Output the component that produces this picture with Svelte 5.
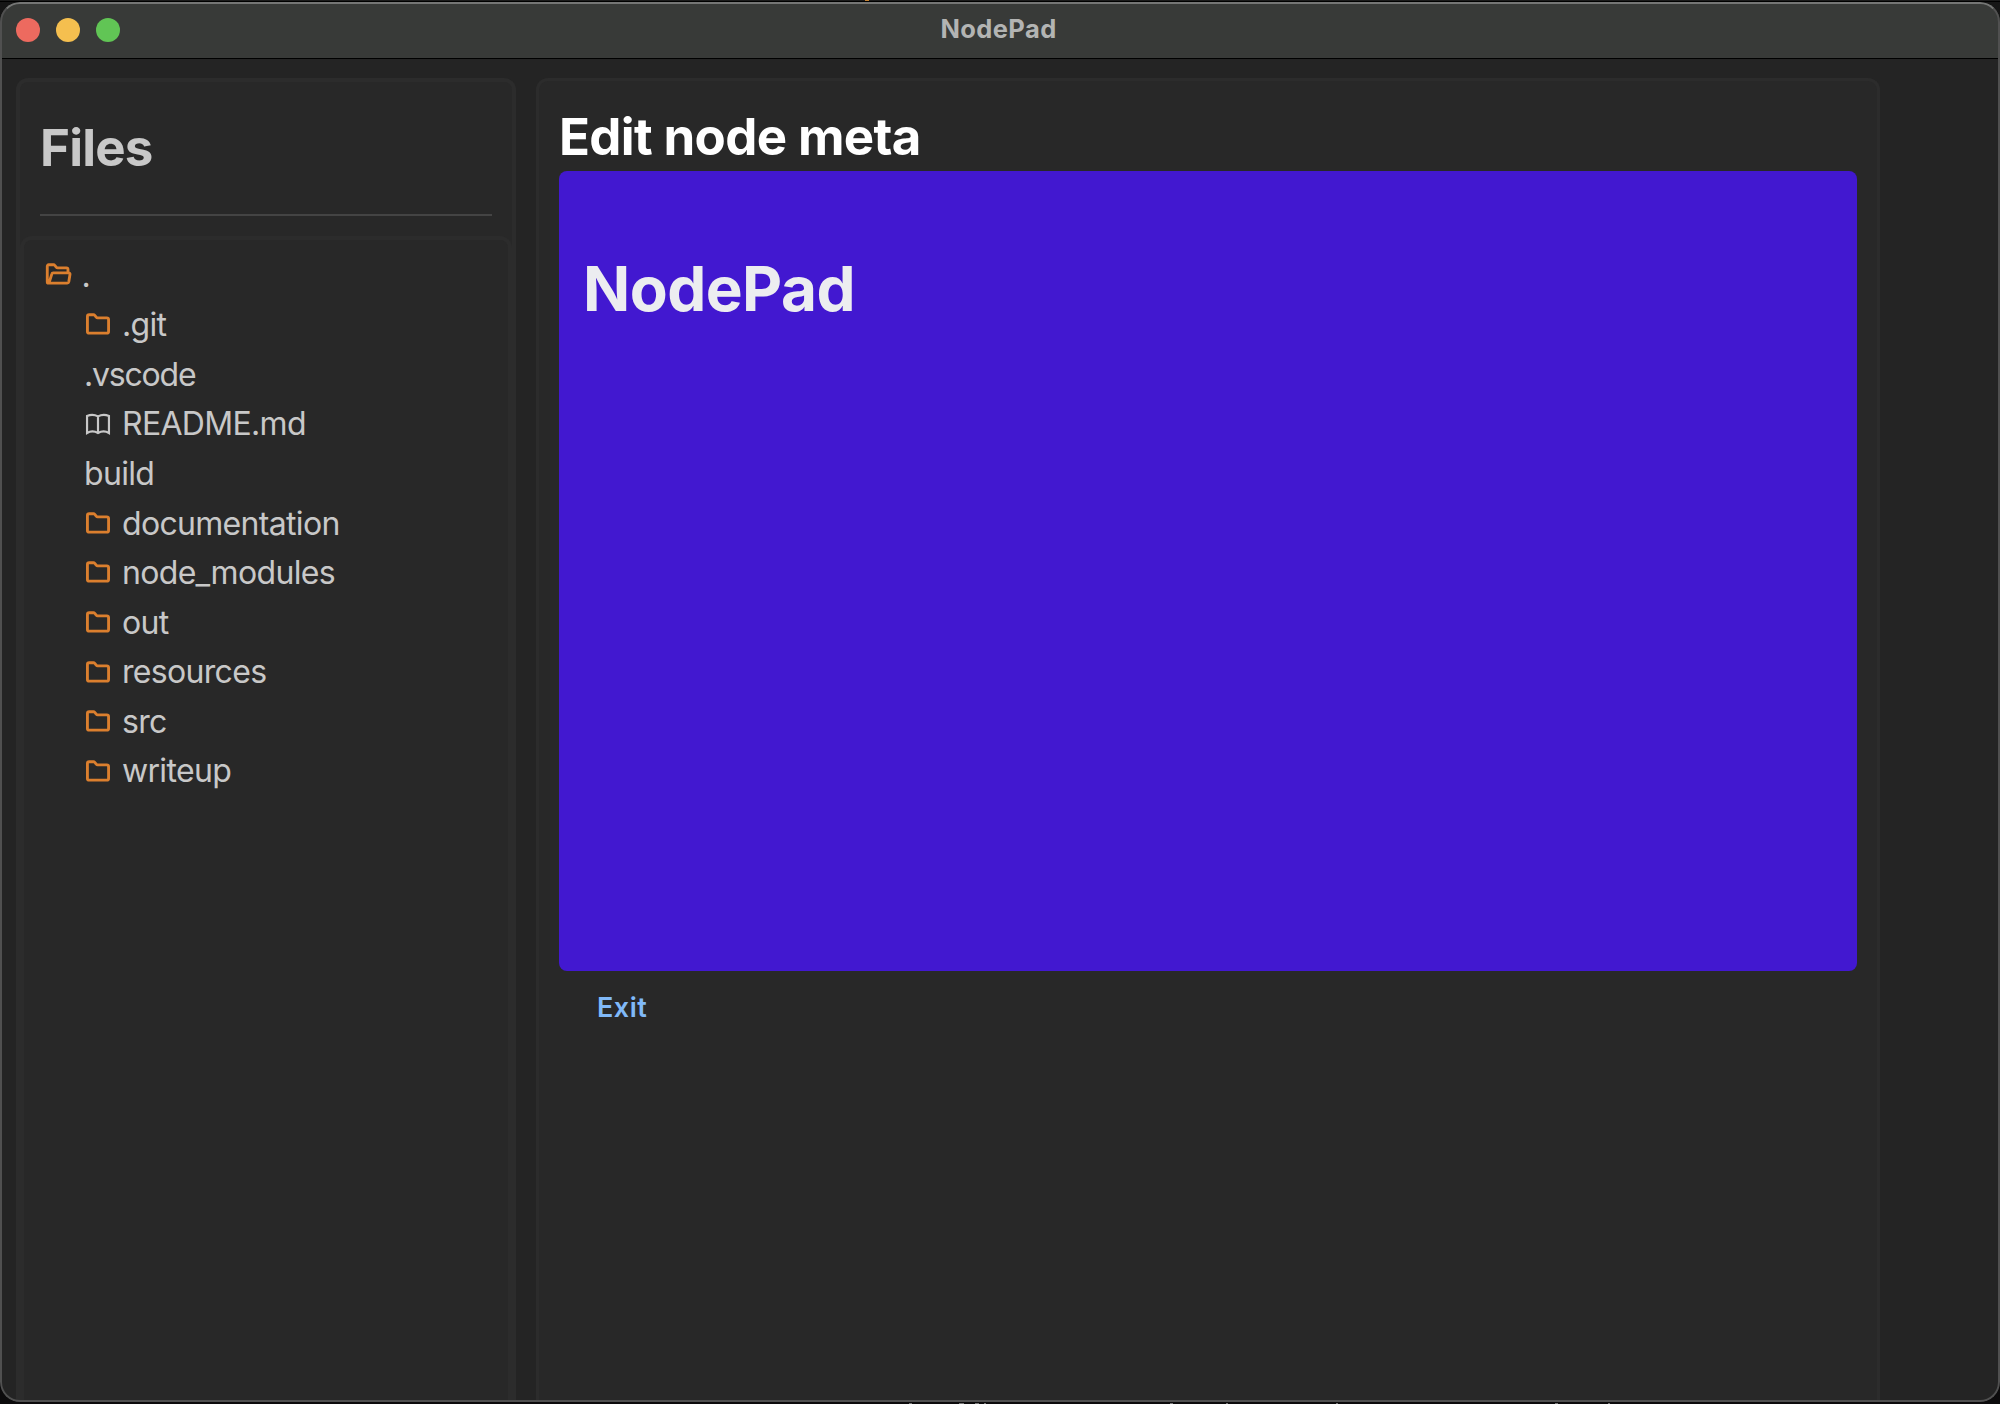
<script>
  const entries = [
    { name: '.', icon: 'open', root: true },
    { name: '.git', icon: 'folder' },
    { name: '.vscode', tight: true },
    { name: 'README.md', icon: 'book' },
    { name: 'build' },
    { name: 'documentation', icon: 'folder' },
    { name: 'node_modules', icon: 'folder' },
    { name: 'out', icon: 'folder' },
    { name: 'resources', icon: 'folder' },
    { name: 'src', icon: 'folder' },
    { name: 'writeup', icon: 'folder' },
  ];
</script>

{#snippet icon(kind)}
  {#if kind === 'open'}
    <svg class="icon orange" viewBox="0 0 17 16">
      <path d="M1.7 14.1c-.5 0-.85-.4-.85-.85V2.75c0-.5.4-.9.9-.9h3.3c.3 0 .6.15.8.4l1.1 1.3c.2.25.5.4.8.4h5.9c.6 0 1 .4 1 1v1.9M2 14.1l1.9-6.2c.1-.4.5-.7.9-.7h10.4c.5 0 .9.5.8 1l-.8 5c-.1.5-.5.9-1 .9Z" />
    </svg>
  {:else if kind === 'folder'}
    <svg class="icon orange" viewBox="0 0 16 16">
      <path d="M.95 3c0-.65.5-1.15 1.15-1.15h2.8c.4 0 .7.15.95.45l.95 1.15c.25.3.55.45.95.45h6.1c.65 0 1.2.5 1.2 1.15v7.9c0 .65-.55 1.15-1.2 1.15H2.1c-.65 0-1.15-.5-1.15-1.15Z" />
    </svg>
  {:else}
    <svg class="icon book" viewBox="0 0 16 16">
      <path d="M.7 2.7C2.8 1.7 5.8 1.7 8 2.9c2.2-1.2 5.2-1.2 7.3-.2V14C13.2 12.7 10.2 12.7 8 14 5.8 12.7 2.8 12.7.7 14ZM8 2.9V14" />
    </svg>
  {/if}
{/snippet}

<div class="desktop">
  <div class="window">
    <header class="titlebar">
      <div class="lights">
        <span class="light close"></span>
        <span class="light minimise"></span>
        <span class="light zoom"></span>
      </div>
      <span class="title">NodePad</span>
    </header>
    <div class="content">
      <aside class="files">
        <h2>Files</h2>
        <hr />
        <ul class="tree">
          {#each entries as entry}
            <li class:root={entry.root} class:plain={!entry.icon} class:tight={entry.tight}>
              {#if entry.icon}{@render icon(entry.icon)}{/if}
              <span>{entry.name}</span>
            </li>
          {/each}
        </ul>
      </aside>
      <main class="editor">
        <h2>Edit node meta</h2>
        <section class="node"><h1>NodePad</h1></section>
        <button class="exit">Exit</button>
      </main>
    </div>
  </div>
</div>

<style>
  :global(body) {
    background: #0c0b0c;
    overflow: hidden;
  }
  .desktop {
    box-sizing: border-box;
    height: 1404px;
    padding: 2px 0;
    font-family: Inter, sans-serif;
    background:
      linear-gradient(#c88432, #c88432) 865px 0 / 4px 1px no-repeat,
      linear-gradient(#777, #777) 909px 1403px / 3px 1px no-repeat,
      linear-gradient(#777, #777) 959px 1403px / 5px 1px no-repeat,
      linear-gradient(#777, #777) 975px 1403px / 4px 1px no-repeat,
      linear-gradient(#777, #777) 984px 1403px / 2px 1px no-repeat,
      linear-gradient(#777, #777) 1170px 1403px / 3px 1px no-repeat,
      linear-gradient(#777, #777) 1226px 1403px / 2px 1px no-repeat,
      linear-gradient(#777, #777) 1336px 1403px / 2px 1px no-repeat,
      linear-gradient(#777, #777) 1555px 1403px / 3px 1px no-repeat,
      linear-gradient(#777, #777) 1608px 1403px / 2px 1px no-repeat,
      linear-gradient(#1b1b1b 0 1px, #000 1px 2px, #161616 2px 30px, #0c0b0c 30px);
  }
  .window {
    box-sizing: border-box;
    position: relative;
    display: flex;
    flex-direction: column;
    height: 1400px;
    border-radius: 20px;
    overflow: hidden;
    background: #242424;
  }
  /* Light rim drawn over the window's contents */
  .window::after {
    content: '';
    position: absolute;
    inset: 0;
    border: 2px solid #505050;
    border-top-color: #757675;
    border-radius: 20px;
    pointer-events: none;
  }
  .titlebar {
    box-sizing: border-box;
    display: grid;
    grid-template-columns: 1fr auto 1fr;
    align-items: center;
    height: 57px;
    padding: 0 16px 3px;
    background: #383a38;
    border-bottom: 1px solid #000;
  }
  .lights {
    display: flex;
    gap: 16px;
    padding-top: 3px;
  }
  .light {
    width: 24px;
    height: 24px;
    border-radius: 50%;
  }
  .close { background: #ed6a5f; }
  .minimise { background: #f5bf4f; }
  .zoom { background: #61c555; }
  .title {
    margin-left: -3px;
    color: #b3b4b3;
    font-size: 25.5px;
    font-weight: 700;
    line-height: 32px;
    letter-spacing: 0.4px;
  }
  .content {
    flex: 1;
    display: flex;
    gap: 20px;
    min-height: 0;
    padding: 19px 120px 0 16px;
  }
  .files,
  .editor {
    box-sizing: border-box;
    background: #282828;
    border: 4px solid #2c2c2c;
    border-bottom: 0;
    border-radius: 12px 12px 0 0;
  }
  .files {
    display: flex;
    flex-direction: column;
    width: 500px;
    color: #c8c8c8;
  }
  h1,
  h2 {
    margin: 0;
    font-weight: 700;
  }
  h2 {
    font-size: 51px;
    line-height: 60px;
    letter-spacing: -0.64px;
  }
  .files h2 {
    padding: 36px 20px 0;
    letter-spacing: -0.8px;
  }
  hr {
    width: 452px;
    height: 2px;
    margin: 36px 20px 20px;
    border: 0;
    background: #444;
  }
  .tree {
    flex: 1;
    margin: 0;
    padding: 10px 16px;
    list-style: none;
    border: 4px solid #2c2c2c;
    border-bottom: 0;
    border-radius: 12px 12px 0 0;
  }
  li {
    display: flex;
    align-items: center;
    gap: 12px;
    height: 49.6px;
    padding-left: 46px;
    font-size: 32px;
    line-height: 46px;
    letter-spacing: -0.68px;
  }
  li.plain {
    padding-left: 44px;
  }
  li.tight {
    letter-spacing: -1.2px;
  }
  li.root {
    gap: 10px;
    padding-left: 6px;
  }
  li span {
    margin-top: 1.5px;
  }
  .icon {
    width: 24px;
    height: 24px;
    fill: none;
    overflow: visible;
  }
  .orange {
    stroke: #db7f2e;
    stroke-width: 1.9;
    stroke-linejoin: round;
  }
  .book {
    stroke: #c8c8c8;
    stroke-width: 1.45;
  }
  .root .icon {
    width: 25.5px;
    margin-top: -1px;
  }
  .editor {
    flex: 1;
    padding: 26px 20px 0;
    border-width: 3px;
    border-bottom: 0;
  }
  .editor h2 {
    margin-bottom: 4px;
    color: #fff;
  }
  .node {
    box-sizing: border-box;
    height: 800px;
    padding: 80px 24px;
    border-radius: 8px;
    background: #4218d0;
  }
  .node h1 {
    color: #ecedf0;
    font-size: 62px;
    line-height: 76px;
    letter-spacing: -0.55px;
  }
  .exit {
    display: block;
    margin: 19px 0 0 38px;
    padding: 0;
    border: 0;
    background: none;
    color: #80b9f8;
    font: 600 27px/36px Inter, sans-serif;
    letter-spacing: 0.5px;
  }
</style>
